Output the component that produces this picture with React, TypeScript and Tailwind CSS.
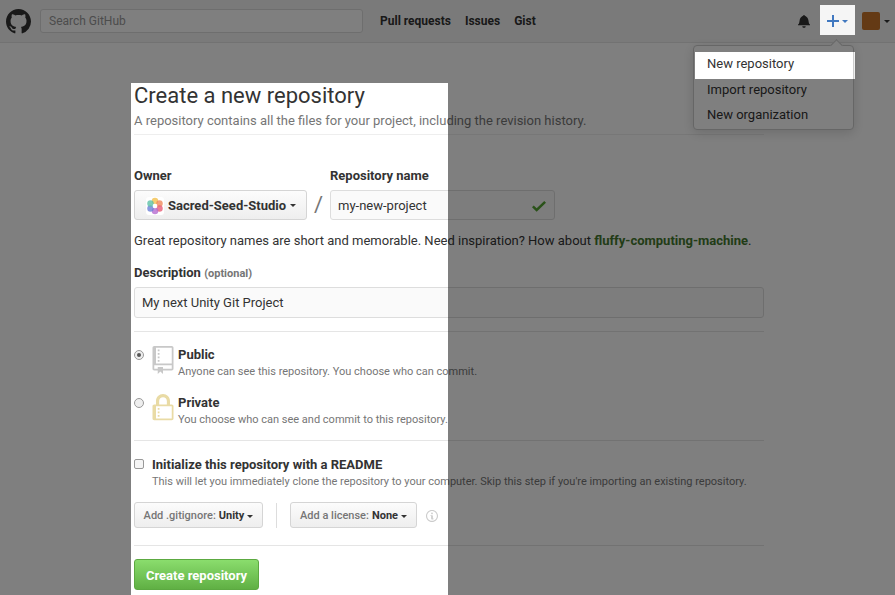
const font = "font-['Roboto',sans-serif]"

const Caret = ({ className = "" }: { className?: string }) => (
  <span className={`inline-block w-0 h-0 border-x-[3px] border-x-transparent border-t-[3px] align-middle ${className}`} />
)

const GithubMark = () => (
  <svg width="25" height="25" viewBox="0 0 16 16" fill="#333" className="shrink-0">
    <path d="M8 0C3.58 0 0 3.58 0 8c0 3.54 2.29 6.53 5.47 7.59.4.07.55-.17.55-.38 0-.19-.01-.82-.01-1.49-2.01.37-2.53-.49-2.69-.94-.09-.23-.48-.94-.82-1.13-.28-.15-.68-.52-.01-.53.63-.01 1.08.58 1.23.82.72 1.21 1.87.87 2.33.66.07-.52.28-.87.51-1.07-1.78-.2-3.64-.89-3.64-3.95 0-.87.31-1.59.82-2.15-.08-.2-.36-1.02.08-2.12 0 0 .67-.21 2.2.82.64-.18 1.32-.27 2-.27.68 0 1.36.09 2 .27 1.53-1.04 2.2-.82 2.2-.82.44 1.1.16 1.92.08 2.12.51.56.82 1.27.82 2.15 0 3.07-1.87 3.75-3.65 3.95.29.25.54.73.54 1.48 0 1.07-.01 1.93-.01 2.2 0 .21.15.46.55.38A8.013 8.013 0 0016 8c0-4.42-3.58-8-8-8z" />
  </svg>
)

const OrgLogo = () => (
  <svg width="18" height="18" viewBox="0 0 20 20" className="rounded-[3px] bg-white shrink-0">
    <circle cx="10" cy="4.4" r="3.6" fill="#f2c14e" opacity="0.8" />
    <circle cx="15" cy="7.2" r="3.6" fill="#f08a5d" opacity="0.8" />
    <circle cx="15" cy="12.8" r="3.6" fill="#e85d75" opacity="0.8" />
    <circle cx="10" cy="15.6" r="3.6" fill="#b56ccf" opacity="0.8" />
    <circle cx="5" cy="12.8" r="3.6" fill="#6b7fd7" opacity="0.8" />
    <circle cx="5" cy="7.2" r="3.6" fill="#5cc1a6" opacity="0.8" />
    <circle cx="10" cy="10" r="2.6" fill="#fff" />
  </svg>
)

const Dim = ({ className }: { className: string }) => (
  <div className={`absolute bg-black/50 ${className}`} />
)

export default function App() {
  return (
    <div className={`relative w-[895px] h-[595px] overflow-hidden bg-white text-[#333] ${font}`}>
      <header className="h-[43px] bg-[#f5f5f5] border-b border-[#e5e5e5] flex items-center pl-[6px]">
        <GithubMark />
        <div className="ml-[9px] w-[323px] h-[24px] bg-white border border-[#ddd] rounded-[3px] px-[8px] flex items-center text-[12px] text-[#999]">
          Search GitHub
        </div>
        <nav className="ml-[17px] flex gap-[14px] text-[12px] font-bold text-[#333]">
          <span>Pull requests</span>
          <span>Issues</span>
          <span>Gist</span>
        </nav>
        <div className="ml-auto flex items-center pr-[5px]">
          <svg width="12" height="14" viewBox="0 0 14 16" fill="#333">
            <path d="M13.99 11.991v1H0v-1l.73-.58c.769-.769.809-2.547 1.189-4.416.77-3.767 4.077-4.996 4.077-4.996 0-.55.45-1 .999-1 .55 0 1 .45 1 1 0 0 3.387 1.229 4.156 4.996.38 1.879.42 3.657 1.19 4.417l.659.58h-.01zM6.995 15.99c1.11 0 1.999-.89 1.999-1.999H4.996c0 1.11.89 1.999 1.999 1.999z" />
          </svg>
          <div className="ml-[10px] w-[35px] h-[30px] flex items-center justify-center">
            <svg width="12" height="16" viewBox="0 0 12 16" fill="#4078c0">
              <path d="M12 9H7v5H5V9H0V7h5V2h2v5h5v2z" />
            </svg>
            <Caret className="ml-[3px] border-t-[#4078c0]" />
          </div>
          <div className="ml-[7px] w-[18px] h-[18px] rounded-[2px] bg-[#c8752a]" />
          <Caret className="ml-[4px] border-t-[#333]" />
        </div>
      </header>

      <main className="pl-[134px] w-[764px] box-content">
        <h1 className="mt-[40px] text-[22px] leading-[26px] font-normal text-[#333]">Create a new repository</h1>
        <p className="mt-[2px] text-[13px] leading-[20px] text-[#767676]">
          A repository contains all the files for your project, including the revision history.
        </p>
        <div className="mt-[3px] w-[630px] border-t border-[#eee]" />

        <div className="mt-[32px] flex">
          <div>
            <div className="text-[13px] leading-[18px] font-bold">Owner</div>
            <button className="mt-[5px] h-[30px] w-[173px] border border-[#d5d5d5] rounded-[3px] bg-gradient-to-b from-[#fcfcfc] to-[#eee] flex items-center pl-[11px] pt-[1px] text-[13px] font-bold text-[#333] whitespace-nowrap">
              <OrgLogo />
              <span className="ml-[4px]">Sacred-Seed-Studio</span>
              <Caret className="ml-[4px] border-t-[#333]" />
            </button>
          </div>
          <span className="mt-[23px] w-[23px] text-center text-[22px] leading-[30px] font-normal text-[#767676]">/</span>
          <div>
            <div className="text-[13px] leading-[18px] font-bold">Repository name</div>
            <div className="mt-[5px] h-[30px] w-[225px] border border-[#ddd] rounded-[3px] bg-[#fafafa] flex items-center pl-[7px] pr-[8px] pt-[1px] text-[13px] text-[#333]">
              <span className="flex-1">my-new-project</span>
              <svg width="14" height="18" viewBox="0 0 12 16" fill="#55a532" preserveAspectRatio="none">
                <path d="M12 5l-8 8-4-4 1.5-1.5L4 10l6.5-6.5L12 5z" />
              </svg>
            </div>
          </div>
        </div>

        <p className="mt-[11px] text-[13px] leading-[20px] text-[#333] whitespace-nowrap">
          Great repository names are short and memorable. Need inspiration? How about{" "}
          <span className="font-bold text-[#44782e]">fluffy-computing-machine</span>.
        </p>

        <div className="mt-[12px] text-[13px] leading-[20px] font-bold">
          Description <span className="text-[11px] text-[#767676]">(optional)</span>
        </div>
        <div className="mt-[3px] h-[31px] w-[630px] border border-[#ddd] rounded-[3px] bg-[#fafafa] flex items-center pl-[7px] pt-[1px] text-[13px]">
          My next Unity Git Project
        </div>
        <div className="mt-[13px] w-[630px] border-t border-[#e5e5e5]" />

        <div className="mt-[14px] flex h-[35px]">
          <span className="mt-[4px] w-[10px] h-[10px] rounded-full border border-[#999] bg-[#eee] flex items-center justify-center">
            <span className="w-[4px] h-[4px] rounded-full bg-[#555]" />
          </span>
          <svg width="22" height="28" viewBox="0 0 12 16" fill="#c8c8c8" className="ml-[8px] shrink-0">
            <path d="M4 9H3V8h1v1zm0-3H3v1h1V6zm0-2H3v1h1V4zm0-2H3v1h1V2zm8-1v12c0 .55-.45 1-1 1H6v2l-1.5-1.5L3 16v-2H1c-.55 0-1-.45-1-1V1c0-.55.45-1 1-1h10c.55 0 1 .45 1 1zm-1 10H1v2h2v-1h3v1h5v-2zm0-10H2v9h9V1z" />
          </svg>
          <div className="ml-[4px]">
            <div className="text-[13px] leading-[18px] font-bold">Public</div>
            <div className="text-[11px] leading-[15px] text-[#767676] whitespace-nowrap">Anyone can see this repository. You choose who can commit.</div>
          </div>
        </div>

        <div className="mt-[13px] flex h-[35px]">
          <span className="mt-[4px] w-[10px] h-[10px] rounded-full border border-[#999] bg-[#eee]" />
          <svg width="22" height="28" viewBox="0 0 12 16" fill="#e9dba5" className="ml-[8px] shrink-0">
            <path d="M4 13H3v-1h1v1zm8-6v7c0 .55-.45 1-1 1H1c-.55 0-1-.45-1-1V7c0-.55.45-1 1-1h1V4c0-2.2 1.8-4 4-4s4 1.8 4 4v2h1c.55 0 1 .45 1 1zM3.8 6h4.41V4c0-1.22-.98-2.2-2.2-2.2-1.22 0-2.2.98-2.2 2.2v2H3.8zM11 7H2v7h9V7zM4 8H3v1h1V8zm0 2H3v1h1v-1z" />
          </svg>
          <div className="ml-[4px]">
            <div className="text-[13px] leading-[18px] font-bold">Private</div>
            <div className="text-[11px] leading-[15px] text-[#767676] whitespace-nowrap">You choose who can see and commit to this repository.</div>
          </div>
        </div>

        <div className="mt-[11px] w-[630px] border-t border-[#e5e5e5]" />

        <div className="mt-[15px] flex">
          <span className="mt-[3px] w-[10px] h-[10px] rounded-[2px] border border-[#999] bg-[#f5f5f5]" />
          <div className="ml-[8px]">
            <div className="text-[13px] leading-[18px] font-bold">Initialize this repository with a README</div>
            <div className="text-[11px] leading-[16px] text-[#767676] whitespace-nowrap">
              This will let you immediately clone the repository to your computer. Skip this step if you're importing an existing repository.
            </div>
          </div>
        </div>

        <div className="mt-[12px] flex items-center">
          <button className="h-[26px] w-[129px] border border-[#d5d5d5] rounded-[3px] bg-gradient-to-b from-[#fcfcfc] to-[#eee] pt-[2px] text-[11px] font-medium text-[#767676] flex items-center justify-center">
            Add .gitignore:<b className="ml-[3px] text-[#333]">Unity</b>
            <Caret className="ml-[3px] border-t-[#333]" />
          </button>
          <div className="ml-[13px] h-[25px] border-l border-[#ddd]" />
          <button className="ml-[13px] h-[26px] w-[127px] border border-[#d5d5d5] rounded-[3px] bg-gradient-to-b from-[#fcfcfc] to-[#eee] pt-[2px] text-[11px] font-medium text-[#767676] flex items-center justify-center">
            Add a license:<b className="ml-[3px] text-[#333]">None</b>
            <Caret className="ml-[3px] border-t-[#333]" />
          </button>
          <svg width="12" height="14" viewBox="0 0 14 16" fill="#ccc" className="ml-[9px] mt-[2px]">
            <path d="M6.3 5.69a.942.942 0 0 1-.28-.7c0-.28.09-.52.28-.7.19-.18.42-.28.7-.28.28 0 .52.09.7.28.18.19.28.42.28.7 0 .28-.09.52-.28.7a1 1 0 0 1-.7.3c-.28 0-.52-.11-.7-.3zM8 7.99c-.02-.25-.11-.48-.31-.69-.2-.19-.42-.3-.69-.31H6c-.27.02-.48.13-.69.31-.2.2-.3.44-.31.69h1v3c.02.27.11.5.31.69.2.2.42.31.69.31h1c.27 0 .48-.11.69-.31.2-.19.3-.42.31-.69H8V7.98v.01zM7 2.3c-3.14 0-5.7 2.54-5.7 5.68 0 3.14 2.56 5.7 5.7 5.7s5.7-2.55 5.7-5.7c0-3.15-2.56-5.69-5.7-5.69v.01zM7 .98c3.86 0 7 3.14 7 7s-3.14 7-7 7-7-3.12-7-7 3.14-7 7-7z" />
          </svg>
        </div>
        <div className="mt-[17px] w-[630px] border-t border-[#e5e5e5]" />

        <button className="mt-[13px] h-[31px] w-[125px] border border-[#5ca941] rounded-[3px] bg-gradient-to-b from-[#8add6d] to-[#60b044] pt-[2px] text-[13px] font-bold text-white">
          Create repository
        </button>
      </main>

      {/* dropdown */}
      <div className="absolute left-[693px] top-[45px] w-[161px] h-[85px] bg-white border border-[#ccc] rounded-[4px] shadow-[0_3px_12px_rgba(0,0,0,0.15)] pt-[5px] text-[13px] text-[#333]">
        <div className="absolute -top-[5px] right-[12px] w-[9px] h-[9px] rotate-45 bg-white border-l border-t border-[#ccc]" />
        <div className="relative pl-[13px] h-[26px] leading-[26px]">New repository</div>
        <div className="relative pl-[13px] h-[25px] leading-[25px]">Import repository</div>
        <div className="relative pl-[13px] h-[25px] leading-[25px]">New organization</div>
      </div>

      {/* tutorial overlay, holes left for the highlighted parts */}
      <Dim className="left-0 top-0 w-[895px] h-[5px]" />
      <Dim className="left-0 top-[5px] w-[820px] h-[30px]" />
      <Dim className="left-[855px] top-[5px] w-[40px] h-[30px]" />
      <Dim className="left-0 top-[35px] w-[895px] h-[17px]" />
      <Dim className="left-0 top-[52px] w-[695px] h-[27px]" />
      <Dim className="left-[855px] top-[52px] w-[40px] h-[27px]" />
      <Dim className="left-0 top-[79px] w-[895px] h-[4px]" />
      <Dim className="left-0 top-[83px] w-[131px] h-[512px]" />
      <Dim className="left-[448px] top-[83px] w-[447px] h-[512px]" />
    </div>
  )
}
